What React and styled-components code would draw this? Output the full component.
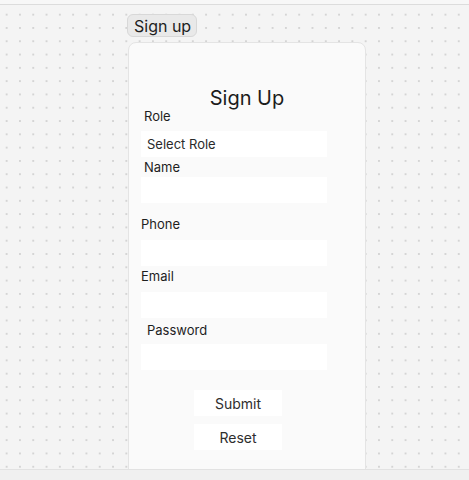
import React from 'react';
import styled, {createGlobalStyle} from 'styled-components';

const GlobalStyle = createGlobalStyle`
  html, body {
    margin: 0;
    padding: 0;
    background: #f3f3f3;
    font-family: Inter, "Noto Sans", sans-serif;
  }
`;

const Page = styled.div`
  width: 469px;
  height: 480px;
  display: flex;
  flex-direction: column;
  overflow: hidden;
`;

const TopStrip = styled.div`
  height: 4px;
  background: #f7f7f7;
  border-bottom: 1px solid #dcdcdc;
`;

const Canvas = styled.div`
  height: 464px;
  overflow: hidden;
  background-color: #f4f4f4;
  background-image: radial-gradient(circle, #d4d4d4 0.8px, transparent 1.2px);
  background-size: 13.3px 13.3px;
  background-position: 0px 3px;
  padding: 9px 0 0 127px;
  box-sizing: border-box;
`;

const BottomBar = styled.div`
  flex: 1;
  background: #f0f0f0;
  border-top: 1px solid #e2e2e2;
`;

const Tag = styled.div`
  display: inline-block;
  height: 23px;
  line-height: 22px;
  padding: 0 5px 0 6px;
  box-sizing: border-box;
  background: #e9e9e9;
  border: 1px solid #d8d8d8;
  border-radius: 6px;
  font-size: 16px;
  color: #1e1e1e;
`;

const Card = styled.div`
  margin-top: 5px;
  margin-left: 1px;
  width: 238px;
  height: 460px;
  box-sizing: border-box;
  background: #fafafa;
  border: 1px solid #e4e4e4;
  border-radius: 8px;
  padding: 0 0 0 12px;
`;

const Title = styled.h1`
  margin: 43px 0 0;
  width: 212px;
  text-align: center;
  font-size: 20px;
  line-height: 24px;
  font-weight: 400;
  color: #1c1c1c;
`;

const Label = styled.div`
  margin-top: ${p => p.$top}px;
  padding-left: ${p => p.$indent}px;
  font-size: 13px;
  line-height: 16px;
  color: #1e1e1e;
`;

const Box = styled.div`
  margin-top: ${p => p.$top}px;
  width: 186px;
  height: 26px;
  background: #ffffff;
  box-sizing: border-box;
  padding-left: 6px;
  font-size: 13px;
  line-height: 26px;
  color: #2a2a2a;
`;

const Buttons = styled.div`
  margin-top: 20px;
  margin-left: 53px;
  display: flex;
  flex-direction: column;
  gap: 8px;
`;

const Button = styled.button`
  width: 88px;
  height: 26px;
  border: none;
  background: #ffffff;
  font-family: inherit;
  font-size: 14px;
  color: #2e2e2e;
  padding: 0;
`;

const fields = [
  {label: 'Role', top: -2, indent: 3, gap: 7, value: 'Select Role'},
  {label: 'Name', top: 2, indent: 3, gap: 2},
  {label: 'Phone', top: 13, indent: 0, gap: 8},
  {label: 'Email', top: 2, indent: -1, gap: 8},
  {label: 'Password', top: 4, indent: 6, gap: 6},
];

const App = () => (
  <>
    <GlobalStyle/>
    <Page>
      <TopStrip/>
      <Canvas>
        <Tag>Sign up</Tag>
        <Card>
          <Title>Sign Up</Title>
          {fields.map(f => (
            <React.Fragment key={f.label}>
              <Label $top={f.top} $indent={f.indent}>{f.label}</Label>
              <Box $top={f.gap}>{f.value || ''}</Box>
            </React.Fragment>
          ))}
          <Buttons>
            <Button>Submit</Button>
            <Button>Reset</Button>
          </Buttons>
        </Card>
      </Canvas>
      <BottomBar/>
    </Page>
  </>
);

export default App;
